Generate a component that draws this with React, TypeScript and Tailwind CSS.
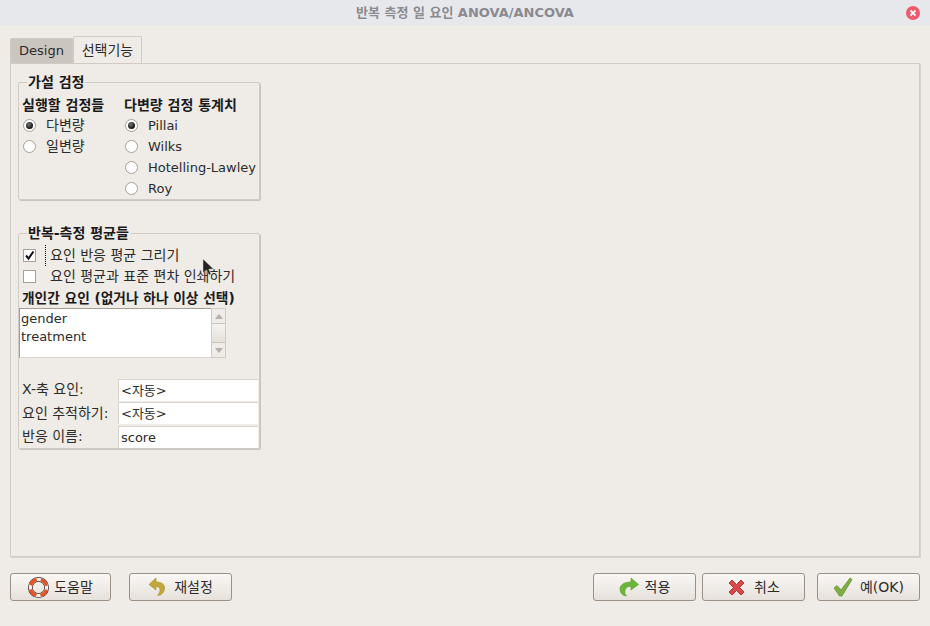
const font = "font-['DejaVu_Sans','Noto_Sans_CJK_KR',sans-serif]"

function Radio({ label, checked, latin }: { label: string; checked?: boolean; latin?: boolean }) {
  return (
    <div className="flex h-[21px] items-center">
      <span className="ml-[1px] flex h-[13px] w-[13px] items-center justify-center rounded-full border border-[#a89f95] bg-white">
        {checked && <span className="h-[7px] w-[7px] rounded-full bg-[radial-gradient(circle_at_40%_35%,#777,#111_70%)]" />}
      </span>
      <span className={`ml-[10px] whitespace-nowrap text-[#2b2b2b] ${latin ? 'text-[13px]' : ''}`}>{label}</span>
    </div>
  )
}

function Check({ label, checked, focus }: { label: string; checked?: boolean; focus?: boolean }) {
  return (
    <div className="flex h-[21px] items-center">
      <span className="ml-[1px] flex h-[13px] w-[13px] items-center justify-center border border-[#a89f95] bg-white">
        {checked && (
          <svg width="11" height="11" viewBox="0 0 11 11">
            <path d="M2 5.5 L4.5 8.5 L9.5 1.5" fill="none" stroke="#111" strokeWidth="2" />
          </svg>
        )}
      </span>
      <span className={`ml-[9px] h-[21px] w-px ${focus ? 'border-l border-dotted border-black' : ''}`} />
      <span className="ml-[4px] whitespace-nowrap text-[#2b2b2b]">{label}</span>
    </div>
  )
}

function Field({ label, value }: { label: string; value: string }) {
  return (
    <div className="flex h-[23.5px] items-center">
      <span className="w-[96px] whitespace-nowrap text-[#2b2b2b]">{label}</span>
      <span className="flex h-[22px] w-[140px] items-center border-t border-l border-[#d8d3cc] bg-white pl-[2px] text-[13px] text-[#2b2b2b]">{value}</span>
    </div>
  )
}

function Group({ title, className, children }: { title: string; className: string; children: React.ReactNode }) {
  return (
    <fieldset className={`ml-[7px] w-[242px] min-w-0 rounded-[2px] border border-[#d0cbc4] shadow-[1px_1px_0_#c9c4bd] ${className}`}>
      <legend className="ml-[8px] px-[1px] text-[14px] leading-[15px] font-bold text-[#1a1a1a]">{title}</legend>
      {children}
    </fieldset>
  )
}

function Btn({ label, icon, className, gap }: { label: string; icon: React.ReactNode; className: string; gap: string }) {
  return (
    <button className={`flex h-[28px] items-center justify-center rounded-[3px] border border-[#9a9086] bg-gradient-to-b from-[#f9f7f5] to-[#e6e1db] text-[#2b2b2b] ${gap} ${className}`}>
      {icon}
      <span>{label}</span>
    </button>
  )
}

export default function App() {
  return (
    <div className={`flex h-[626px] w-[930px] flex-col bg-[#efebe6] text-[14px] ${font}`}>
      <div className="relative flex h-[26px] items-center justify-center bg-[#e7e8ec] text-[13px] font-bold text-[#8a8a8e]">
        반복 측정 일 요인 ANOVA/ANCOVA
        <span className="absolute top-[6px] right-[10px] flex h-[14px] w-[14px] items-center justify-center rounded-full bg-[#ef5b6d]">
          <svg width="8" height="8" viewBox="0 0 8 8">
            <path d="M1.5 1.5 L6.5 6.5 M6.5 1.5 L1.5 6.5" stroke="#fff" strokeWidth="1.8" />
          </svg>
        </span>
      </div>

      <div className="mx-[10px] mt-[10px] flex h-[27px] items-end">
        <div className="flex h-[25px] w-[63px] items-center justify-center rounded-t-[2px] border border-b-0 border-[#cfc9c2] bg-[#cbc5bf] text-[13px] text-[#2b2b2b]">Design</div>
        <div className="flex h-[27px] w-[69px] items-center justify-center rounded-t-[2px] border border-b-0 border-[#d0cbc4] bg-[#efebe6] text-[#2b2b2b]">선택기능</div>
      </div>

      <div className="mx-[10px] flex h-[494px] flex-col border border-[#d0cbc4] pt-[11px] shadow-[1px_1px_0_#d8d3cc]">
        <Group title="가설 검정" className="h-[125px]">
          <div className="flex pt-[6px] pl-[3px]">
            <div className="w-[102px]">
              <div className="flex h-[18px] items-center font-bold whitespace-nowrap text-[#1a1a1a]">실행할 검정들</div>
              <div className="mt-[1px]">
                <Radio label="다변량" checked />
                <Radio label="일변량" />
              </div>
            </div>
            <div>
              <div className="flex h-[18px] items-center font-bold whitespace-nowrap text-[#1a1a1a]">다변량 검정 통계치</div>
              <div className="mt-[1px]">
                <Radio label="Pillai" checked latin />
                <Radio label="Wilks" latin />
                <Radio label="Hotelling-Lawley" latin />
                <Radio label="Roy" latin />
              </div>
            </div>
          </div>
        </Group>

        <Group title="반복-측정 평균들" className="mt-[26px] h-[223px]">
          <div className="pl-[3px]">
            <div className="mt-[4px]">
              <Check label="요인 반응 평균 그리기" checked focus />
              <Check label="요인 평균과 표준 편차 인쇄하기" />
            </div>
            <div className="mt-[1px] flex h-[20px] items-center text-[13.7px] font-bold whitespace-nowrap text-[#1a1a1a]">개인간 요인 (없거나 하나 이상 선택)</div>
            <div className="-ml-[3px] flex h-[50px] w-[207px]">
              <div className="w-[192px] border-t border-b border-l border-t-[#a39d96] border-b-[#d8d3cc] border-l-[#a39d96] bg-white pt-[1px] pl-[1px] text-[13px] leading-[18px] text-[#2b2b2b]">
                <div>gender</div>
                <div>treatment</div>
              </div>
              <div className="flex w-[15px] flex-col border border-[#d0cbc4] bg-[#e4dfd9]">
                <span className="flex h-[14px] items-center justify-center bg-[#efebe6]">
                  <span className="border-x-[4px] border-b-[5px] border-x-transparent border-b-[#b5b0aa]" />
                </span>
                <span className="h-[20px] border-y border-[#c9c4bd] bg-gradient-to-b from-[#f5f3f0] to-[#e4dfd9]" />
                <span className="mt-auto flex h-[14px] items-center justify-center bg-[#efebe6]">
                  <span className="border-x-[4px] border-t-[5px] border-x-transparent border-t-[#b5b0aa]" />
                </span>
              </div>
            </div>
            <div className="mt-[20px]">
              <Field label="X-축 요인:" value="<자동>" />
              <Field label="요인 추적하기:" value="<자동>" />
              <Field label="반응 이름:" value="score" />
            </div>
          </div>
        </Group>
      </div>

      <div className="mx-[10px] mt-[16px] flex">
        <Btn
          label="도움말"
          className="w-[101px]"
          gap="gap-[5px]"
          icon={
            <svg width="21" height="21" viewBox="0 0 22 22">
              <circle cx="11" cy="11" r="8.5" fill="none" stroke="#3a2a2a" strokeWidth="5" />
              <circle cx="11" cy="11" r="8.5" fill="none" stroke="#f0f0f0" strokeWidth="3.4" />
              <circle cx="11" cy="11" r="8.5" fill="none" stroke="#e8531f" strokeWidth="3.4" strokeDasharray="9 4.35" strokeDashoffset="-2.2" />
            </svg>
          }
        />
        <Btn
          label="재설정"
          className="ml-[18px] w-[103px]"
          gap="gap-[8px]"
          icon={
            <svg width="18" height="20" viewBox="0 0 18 20">
              <path d="M8 1 L1 7.5 L8 13 L8 9.5 C11 9.5 12 11 12 13 C12 15 11 17 9.5 18.5 C14 18 16.5 15 16.5 11 C16.5 7 13 5 8 5 Z" fill="#c2a83a" stroke="#a08a28" strokeWidth="0.6" />
            </svg>
          }
        />
        <Btn
          label="적용"
          className="ml-auto w-[103px]"
          gap="gap-[6px]"
          icon={
            <svg width="20" height="20" viewBox="0 0 20 20">
              <path d="M12 1 L19.5 7.5 L12 13 L12 9.5 C8 9.5 6.5 11 6 13.5 C5.5 16 6 18 7.5 19 C3 18.5 1 15.5 1 12 C1 8 5 5 12 5 Z" fill="#6cb53a" stroke="#559a28" strokeWidth="0.6" />
            </svg>
          }
        />
        <Btn
          label="취소"
          className="ml-[6px] w-[103px]"
          gap="gap-[8px]"
          icon={
            <svg width="19" height="19" viewBox="0 0 19 19">
              <path d="M2 5 L5 2 L9.5 6.5 L14 2 L17 5 L12.5 9.5 L17 14 L14 17 L9.5 12.5 L5 17 L2 14 L6.5 9.5 Z" fill="#d9484a" stroke="#b83436" strokeWidth="1" strokeLinejoin="round" />
            </svg>
          }
        />
        <Btn
          label="예(OK)"
          className="ml-[12px] w-[103px]"
          gap="gap-[7px]"
          icon={
            <svg width="20" height="20" viewBox="0 0 20 20">
              <path d="M1 11 L4 8.5 L8 13 L17 1 L19 2.5 L9 19 L6.5 19 Z" fill="#7fae45" stroke="#5f8a2e" strokeWidth="0.7" strokeLinejoin="round" />
            </svg>
          }
        />
      </div>

      <svg className="absolute top-[258px] left-[202px]" width="13" height="19" viewBox="0 0 13 19">
        <path d="M1 1 L1 15 L4.5 12 L7 17 L9 16 L6.8 11.2 L11.5 11 Z" fill="#222" stroke="#ddd" strokeWidth="0.5" />
      </svg>
    </div>
  )
}
